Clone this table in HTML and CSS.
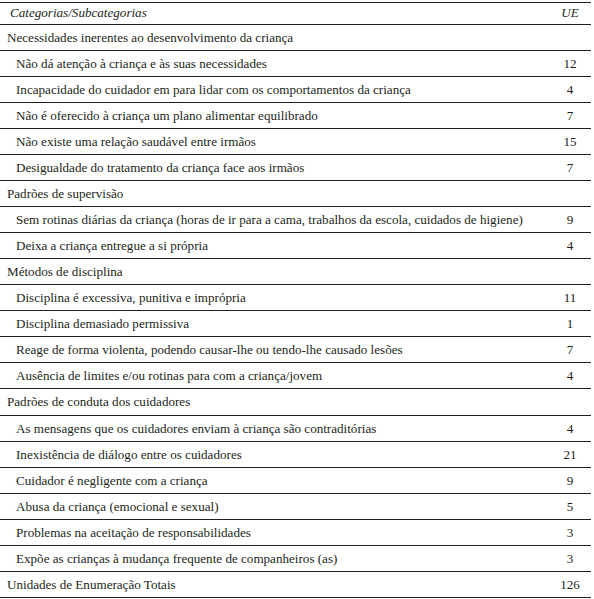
FILE: index.html
```html
<!DOCTYPE html>
<html lang="pt">
<head>
<meta charset="utf-8">
<title>Categorias/Subcategorias</title>
<link rel="stylesheet" href="styles.css">
</head>
<body>
<table class="ue-table">
  <thead>
    <tr class="head-row"><th class="col-label">Categorias/Subcategorias</th><th class="col-num">UE</th></tr>
  </thead>
  <tbody>
    <tr class="cat"><td class="col-label">Necessidades inerentes ao desenvolvimento da criança</td><td class="col-num"></td></tr>
    <tr class="sub"><td class="col-label">Não dá atenção à criança e às suas necessidades</td><td class="col-num">12</td></tr>
    <tr class="sub"><td class="col-label">Incapacidade do cuidador em para lidar com os comportamentos da criança</td><td class="col-num">4</td></tr>
    <tr class="sub"><td class="col-label">Não é oferecido à criança um plano alimentar equilibrado</td><td class="col-num">7</td></tr>
    <tr class="sub"><td class="col-label">Não existe uma relação saudável entre irmãos</td><td class="col-num">15</td></tr>
    <tr class="sub"><td class="col-label">Desigualdade do tratamento da criança face aos irmãos</td><td class="col-num">7</td></tr>
    <tr class="cat"><td class="col-label">Padrões de supervisão</td><td class="col-num"></td></tr>
    <tr class="sub"><td class="col-label">Sem rotinas diárias da criança (horas de ir para a cama, trabalhos da escola, cuidados de higiene)</td><td class="col-num">9</td></tr>
    <tr class="sub"><td class="col-label">Deixa a criança entregue a si própria</td><td class="col-num">4</td></tr>
    <tr class="cat"><td class="col-label">Métodos de disciplina</td><td class="col-num"></td></tr>
    <tr class="sub"><td class="col-label">Disciplina é excessiva, punitiva e imprópria</td><td class="col-num">11</td></tr>
    <tr class="sub"><td class="col-label">Disciplina demasiado permissiva</td><td class="col-num">1</td></tr>
    <tr class="sub"><td class="col-label">Reage de forma violenta, podendo causar-lhe ou tendo-lhe causado lesões</td><td class="col-num">7</td></tr>
    <tr class="sub"><td class="col-label">Ausência de limites e/ou rotinas para com a criança/jovem</td><td class="col-num">4</td></tr>
    <tr class="cat"><td class="col-label">Padrões de conduta dos cuidadores</td><td class="col-num"></td></tr>
    <tr class="sub"><td class="col-label">As mensagens que os cuidadores enviam à criança são contraditórias</td><td class="col-num">4</td></tr>
    <tr class="sub"><td class="col-label">Inexistência de diálogo entre os cuidadores</td><td class="col-num">21</td></tr>
    <tr class="sub"><td class="col-label">Cuidador é negligente com a criança</td><td class="col-num">9</td></tr>
    <tr class="sub"><td class="col-label">Abusa da criança (emocional e sexual)</td><td class="col-num">5</td></tr>
    <tr class="sub"><td class="col-label">Problemas na aceitação de responsabilidades</td><td class="col-num">3</td></tr>
    <tr class="sub"><td class="col-label">Expõe as crianças à mudança frequente de companheiros (as)</td><td class="col-num">3</td></tr>
    <tr class="cat"><td class="col-label">Unidades de Enumeração Totais</td><td class="col-num">126</td></tr>
  </tbody>
</table>
</body>
</html>
```
FILE: styles.css
```css
html, body {
  margin: 0;
  padding: 0;
  background: #ffffff;
}

body {
  padding-top: 2px;
  font-family: "Liberation Serif", "Times New Roman", serif;
  font-size: 13.1px;
  color: #231f20;
}

.ue-table {
  width: 591px;
  border-collapse: collapse;
  table-layout: fixed;
}

.ue-table th,
.ue-table td {
  padding: 0;
  border-bottom: 1.5px solid #231f20;
  white-space: nowrap;
  vertical-align: middle;
  font-weight: normal;
}

.ue-table thead th {
  border-top: 1.5px solid #231f20;
  height: 20.8px;
  font-style: italic;
}

.ue-table tbody td {
  height: 24.05px;
  padding-top: 1px;
}

.col-label {
  text-align: left;
}

.col-num {
  width: 42px;
  text-align: center;
}

.head-row .col-label {
  padding-left: 10px;
}

.cat .col-label {
  padding-left: 7px;
}

.sub .col-label {
  padding-left: 16px;
}
```
